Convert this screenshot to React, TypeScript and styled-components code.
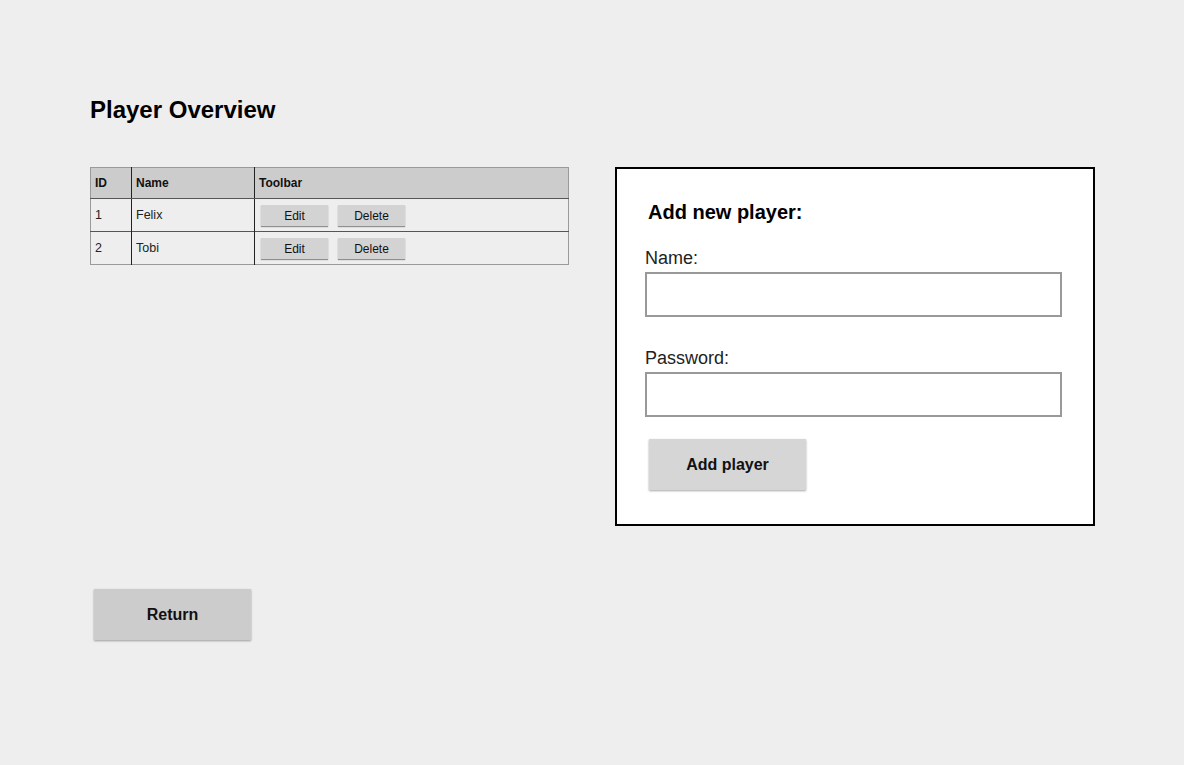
import styled, { createGlobalStyle } from "styled-components";

const players = [
  { id: 1, name: "Felix" },
  { id: 2, name: "Tobi" },
];

export default function App() {
  return (
    <>
      <GlobalStyle />
      <Page>
        <Title>Player Overview</Title>
        <MainRow>
          <PlayerTable>
            <thead>
              <tr>
                <HeadCell $width={41}>ID</HeadCell>
                <HeadCell $width={123}>Name</HeadCell>
                <HeadCell>Toolbar</HeadCell>
              </tr>
            </thead>
            <tbody>
              {players.map((p) => (
                <BodyRow key={p.id}>
                  <Cell>{p.id}</Cell>
                  <Cell>{p.name}</Cell>
                  <ToolCell>
                    <SmallButton>Edit</SmallButton>
                    <SmallButton>Delete</SmallButton>
                  </ToolCell>
                </BodyRow>
              ))}
            </tbody>
          </PlayerTable>

          <FormPanel>
            <FormTitle>Add new player:</FormTitle>
            <Label $gap={25}>Name:</Label>
            <TextInput type="text" />
            <Label $gap={31}>Password:</Label>
            <TextInput type="password" />
            <BigButton $bg="#d6d6d6" $indent={4} $gap={22}>
              Add player
            </BigButton>
          </FormPanel>
        </MainRow>
        <BigButton $bg="#cccccc" $indent={4} $gap={63}>
          Return
        </BigButton>
      </Page>
    </>
  );
}

const GlobalStyle = createGlobalStyle`
  html, body {
    margin: 0;
    padding: 0;
    background: #eeeeee;
    font-family: "Liberation Sans", Arial, sans-serif;
  }
`;

const Page = styled.main`
  display: flex;
  flex-direction: column;
  align-items: flex-start;
  min-height: 765px;
  box-sizing: border-box;
  padding: 96px 0 0 90px;
`;

const Title = styled.h1`
  margin: 0;
  font-size: 24px;
  line-height: 27px;
  font-weight: 700;
  color: #000;
`;

const MainRow = styled.div`
  display: flex;
  align-items: flex-start;
  gap: 46px;
  margin-top: 44px;
`;

const PlayerTable = styled.table`
  width: 479px;
  border-collapse: collapse;
  border: 1px solid #9a9a9a;
  font-size: 12.5px;
  color: #222;
`;

const HeadCell = styled.th<{ $width?: number }>`
  width: ${(p) => (p.$width ? `${p.$width}px` : "auto")};
  height: 31px;
  padding: 0 4px;
  box-sizing: border-box;
  background: #cccccc;
  text-align: left;
  font-size: 12px;
  font-weight: 700;
  color: #111;
  border-bottom: 1px solid #555;

  & + & {
    border-left: 1px solid #222;
  }
`;

const BodyRow = styled.tr`
  & + & td {
    border-top: 1px solid #555;
  }
`;

const Cell = styled.td`
  height: 33px;
  padding: 0 4px;
  box-sizing: border-box;
  vertical-align: middle;

  & + & {
    border-left: 1px solid #222;
  }
`;

const ToolCell = styled(Cell)`
  padding-left: 6px;
  padding-top: 1px;
`;

const SmallButton = styled.button`
  width: 67px;
  height: 21px;
  margin-right: 10px;
  padding: 0;
  border: none;
  background: #d3d3d3;
  box-shadow: 0 1px 1px rgba(0, 0, 0, 0.4);
  font-family: inherit;
  font-size: 12px;
  color: #111;
  vertical-align: middle;
`;

const FormPanel = styled.section`
  display: flex;
  flex-direction: column;
  align-items: flex-start;
  width: 480px;
  height: 359px;
  box-sizing: border-box;
  padding: 32px 0 0 28px;
  background: #fff;
  border: 2px solid #000;
`;

const FormTitle = styled.h2`
  margin: 0 0 0 3px;
  font-size: 20px;
  line-height: 22px;
  font-weight: 700;
  color: #000;
`;

const Label = styled.label<{ $gap: number }>`
  display: block;
  margin-top: ${(p) => p.$gap}px;
  margin-bottom: 4px;
  font-size: 18px;
  line-height: 20px;
  color: #222;
`;

const TextInput = styled.input`
  width: 417px;
  height: 45px;
  box-sizing: border-box;
  margin: 0;
  border: 2px solid #999;
  background: #fff;
  outline: none;
`;

const BigButton = styled.button<{ $bg: string; $indent: number; $gap: number }>`
  width: 157px;
  height: 51px;
  margin: ${(p) => p.$gap}px 0 0 ${(p) => p.$indent}px;
  padding: 0;
  border: none;
  background: ${(p) => p.$bg};
  box-shadow: 0 1px 2px rgba(0, 0, 0, 0.35);
  font-family: inherit;
  font-size: 16px;
  font-weight: 700;
  color: #111;
`;
